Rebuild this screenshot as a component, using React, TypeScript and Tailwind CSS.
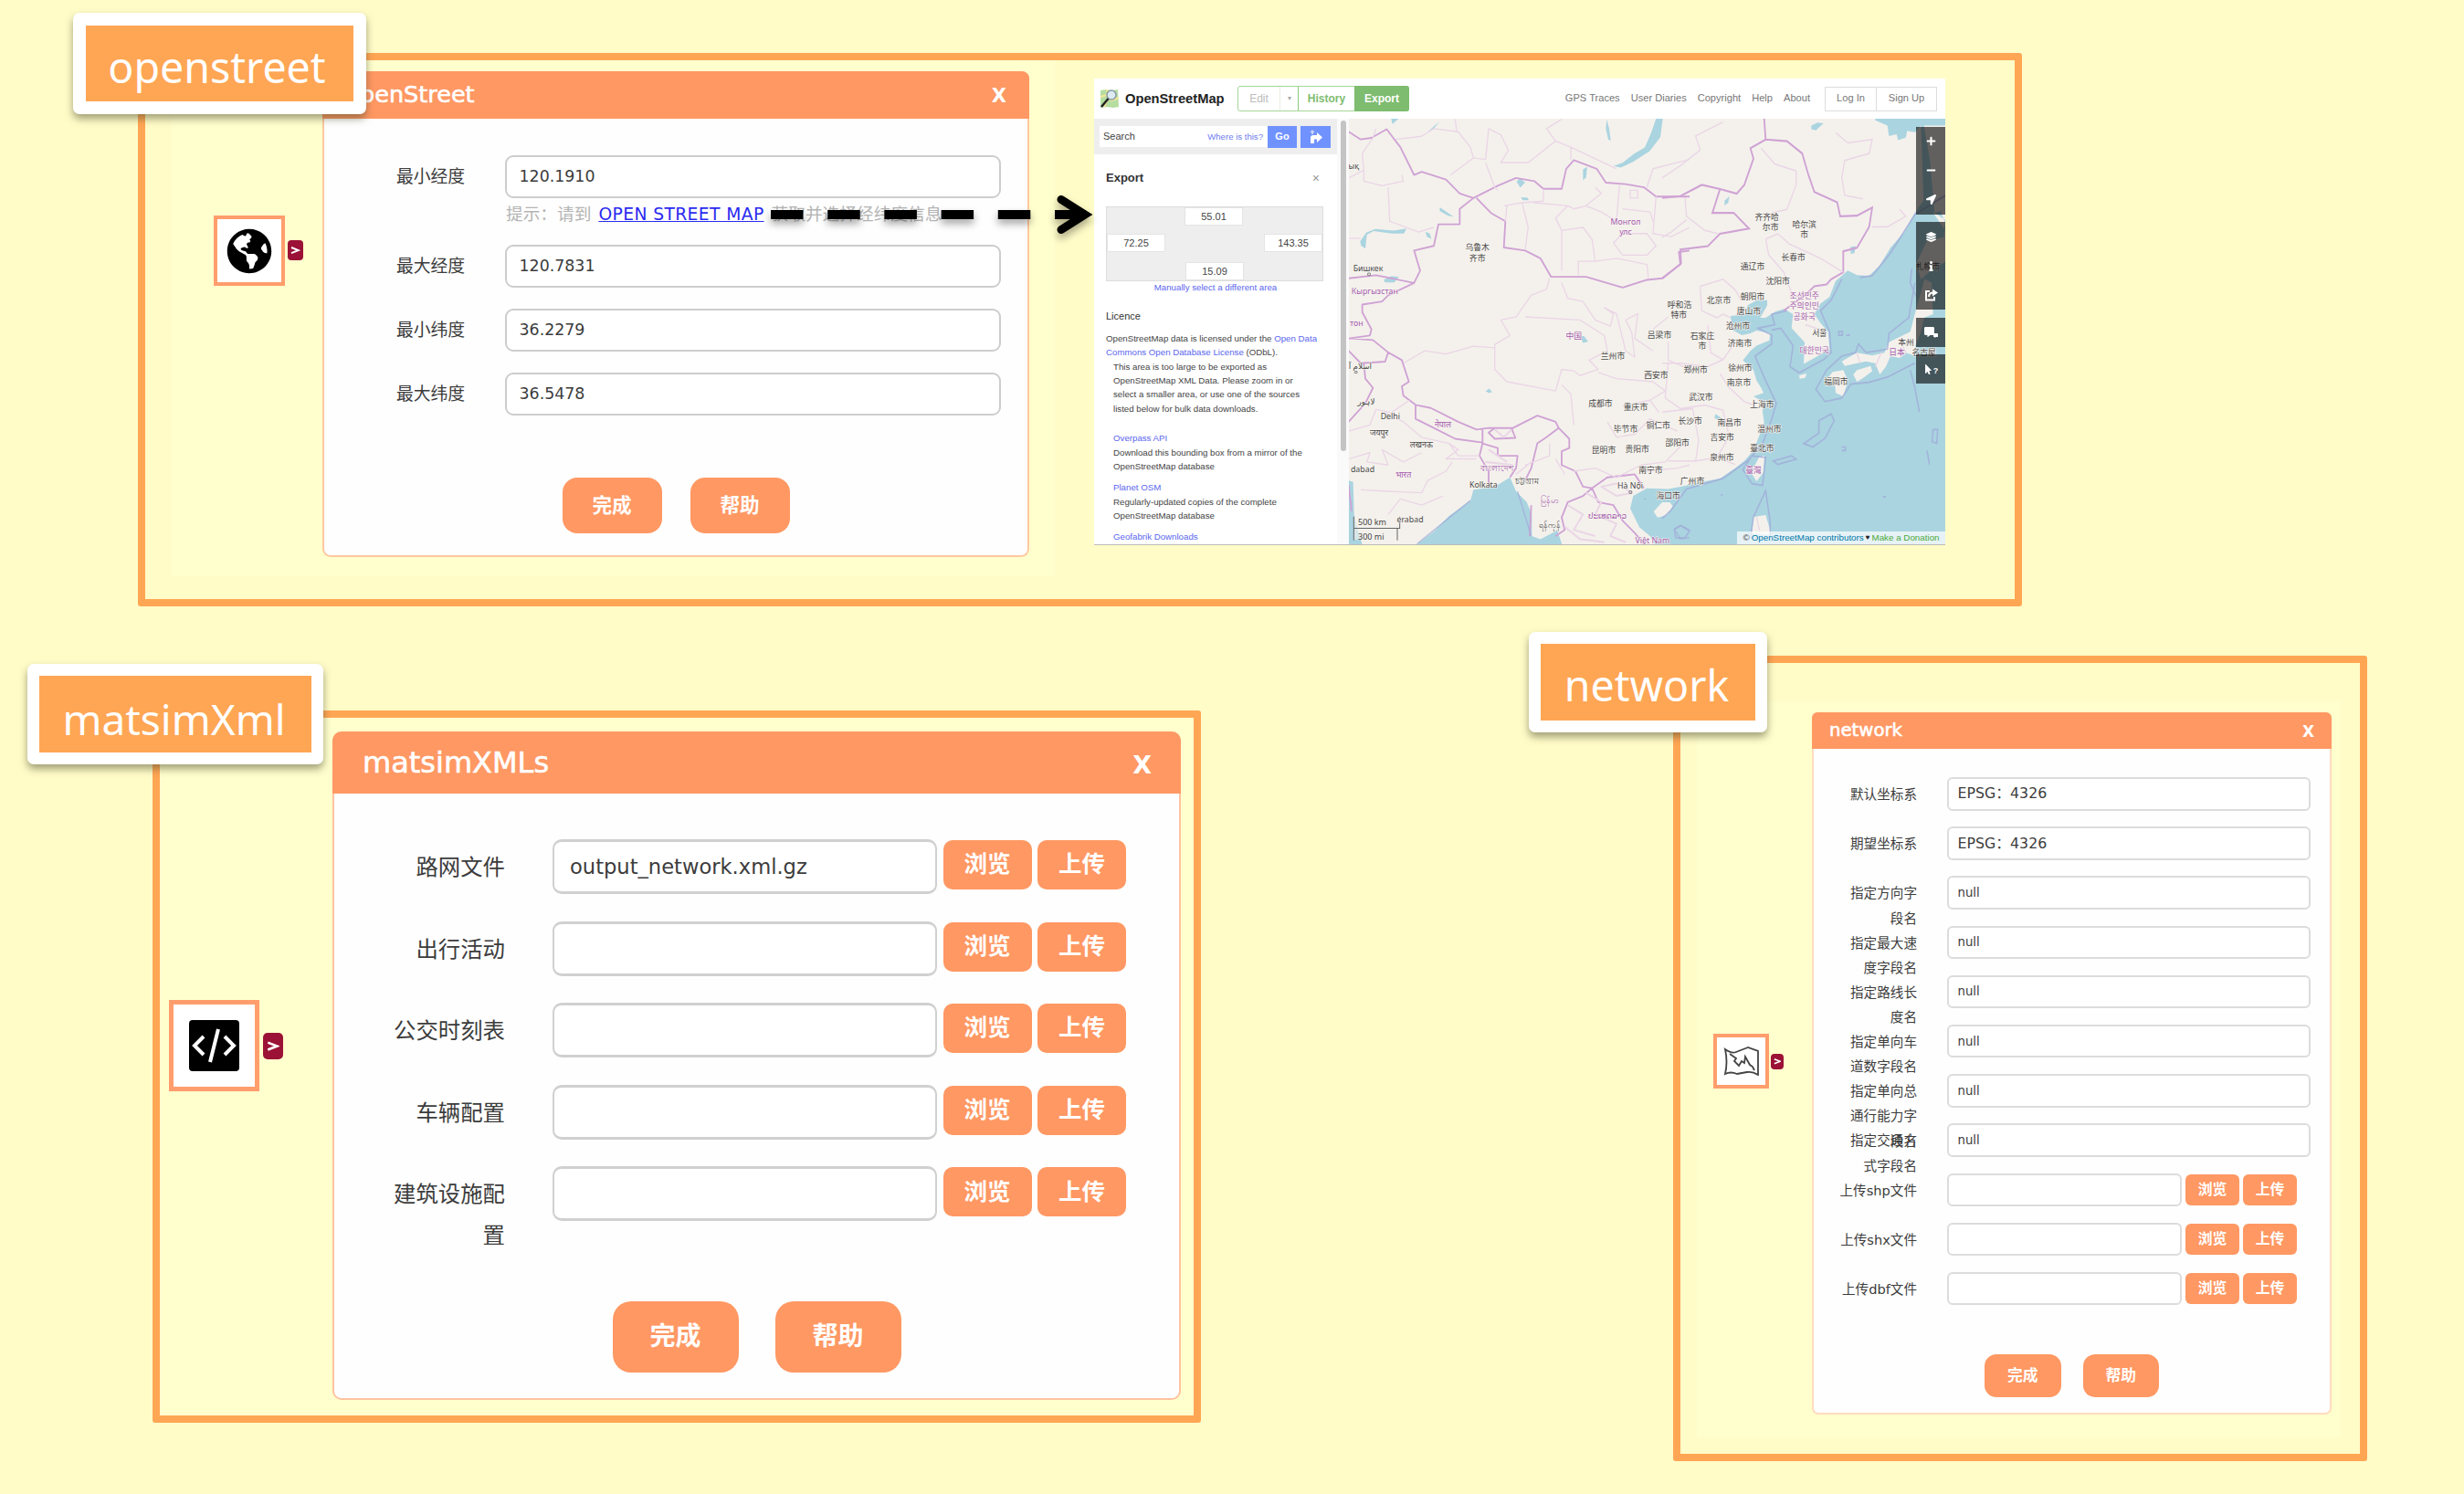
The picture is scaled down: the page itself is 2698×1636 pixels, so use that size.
import React from "react";
import {
  FaGlobeAmericas,
  FaPlus,
  FaMinus,
  FaLocationArrow,
  FaLayerGroup,
  FaInfo,
  FaCommentAlt,
  FaMousePointer,
} from "react-icons/fa";

/* ---------- dialogs ---------- */

type Theme = {
  box: string;
  header: string;
  title: string;
  close: string;
  body: string;
  row: string;
  label: string;
  labelPad: string;
  input: string;
  fileInput: string;
  value: string;
  small: string;
  actions: string;
  action: string;
};

const openTheme: Theme = {
  box: "w-[774px] h-[532px] rounded-[9px] border-[#ffc8a0]",
  header: "h-[52px] pl-[21px] pr-[25px] rounded-t-[8px]",
  title: "text-[25.5px]",
  close: "text-[21px] pt-[3px]",
  body: "pt-[40px]",
  row: "h-[70px]",
  label: "w-[154px] mr-[43.5px] pt-[6px] text-[18.8px] leading-[35px]",
  labelPad: "",
  input: "w-[543px] h-[47px] rounded-[9px] border-2 border-[#cdcdcd] pl-[14px]",
  fileInput: "",
  value: "text-[17.4px]",
  small: "",
  actions: "mt-[45px] gap-[31px]",
  action: "w-[109px] h-[61px] rounded-[16px] text-[21.6px]",
};

const matsimTheme: Theme = {
  box: "w-[929px] h-[732px] rounded-[10px] border-[#ffc3a0]",
  header: "h-[68px] pl-[33px] pr-[32px] rounded-t-[10px]",
  title: "text-[32px]",
  close: "text-[27px] pt-[4px]",
  body: "pt-[50px]",
  row: "h-[89.6px]",
  label: "w-[187px] mr-[52px] pt-[8px] text-[24.4px] leading-[45px]",
  labelPad: "pl-[58px]",
  input: "",
  fileInput: "w-[421px] h-[60px] rounded-[10px] border-2 border-y-[3px] border-[#d0d0d0] pl-[17px]",
  value: "text-[22.6px]",
  small: "w-[97px] h-[54px] mt-[1px] rounded-[10px] text-[25.5px] ml-[6.5px]",
  actions: "mt-[58px] gap-[40px]",
  action: "w-[138px] h-[78px] rounded-[20px] text-[28px]",
};

const networkTheme: Theme = {
  box: "w-[569px] h-[769px] rounded-[7px] border-[#ffdcc0]",
  header: "h-[40px] pl-[19px] pr-[19px] rounded-t-[6px]",
  title: "text-[19.7px]",
  close: "text-[17px] pt-[2px]",
  body: "pt-[31px]",
  row: "h-[54.2px]",
  label: "w-[113px] mr-[33px] pt-[5px] text-[14.6px] leading-[27.2px]",
  labelPad: "pl-[36px]",
  input: "w-[397.5px] h-[36.5px] rounded-[6px] border-2 border-[#dcdcdc] pl-[9.5px]",
  fileInput: "w-[257px] h-[36.5px] rounded-[6px] border-2 border-[#dcdcdc] pl-[9.5px]",
  value: "text-[13.3px]",
  small: "w-[59px] h-[34px] mt-[1px] rounded-[6px] text-[15.8px] ml-[4px]",
  actions: "mt-[36px] gap-[24px]",
  action: "w-[83.5px] h-[47px] rounded-[13px] text-[16.8px]",
};

type RowData = {
  label: string;
  value?: string;
  file?: boolean;
  wide?: boolean;
  valueClass?: string;
  hint?: React.ReactNode;
};

function Dialog({ title, rows, t, className }: { title: string; rows: RowData[]; t: Theme; className: string }) {
  return (
    <div
      className={`shrink-0 border-2 border-t-0 bg-[#fefefe] text-[#3c3c3c] font-['DejaVu_Sans','Noto_Sans_CJK_SC',sans-serif] ${t.box} ${className}`}
    >
      <div className={`-mx-[2px] flex items-center justify-between bg-[#ff9863] leading-none text-white ${t.header}`}>
        <span className={`[-webkit-text-stroke:0.6px_white] ${t.title}`}>{title}</span>
        <span className={`font-bold ${t.close}`}>X</span>
      </div>
      <div className={t.body}>
        {rows.map((r) => (
          <React.Fragment key={r.label}>
            <div className={`flex items-start ${t.row}`}>
              <div className={`shrink-0 text-right ${t.label} ${r.wide ? "whitespace-nowrap" : `break-all ${t.labelPad}`}`}>
                {r.label}
              </div>
              <div
                className={`flex shrink-0 items-center bg-white leading-none ${r.file ? t.fileInput : t.input} ${
                  r.valueClass ?? t.value
                }`}
              >
                {r.value}
              </div>
              {r.file && (
                <>
                  <Btn className={t.small}>浏览</Btn>
                  <Btn className={t.small}>上传</Btn>
                </>
              )}
            </div>
            {r.hint}
          </React.Fragment>
        ))}
        <div className={`flex justify-center ${t.actions}`}>
          <Btn className={t.action}>完成</Btn>
          <Btn className={t.action}>帮助</Btn>
        </div>
      </div>
    </div>
  );
}

function Btn({ children, className }: { children: React.ReactNode; className: string }) {
  return (
    <button className={`flex shrink-0 items-center justify-center bg-[#ff9863] font-bold leading-none text-white ${className}`}>
      {children}
    </button>
  );
}

function Tag({ children, className }: { children: string; className: string }) {
  return (
    <div
      className={`absolute z-10 flex items-center justify-center rounded-[7px] border-white bg-[#ffa654] font-['Noto_Sans','Open_Sans',sans-serif] leading-none text-white shadow-[0_5px_9px_rgba(70,70,40,0.5)] ${className}`}
    >
      {children}
    </div>
  );
}

function Port({ className }: { className: string }) {
  return (
    <div className={`flex shrink-0 items-center justify-center bg-[#9b1236] ${className}`}>
      <svg viewBox="0 0 10 10" className="w-[60%]" fill="none" stroke="white" strokeWidth="2">
        <path d="M1 2 8.500 5 1 8" />
      </svg>
    </div>
  );
}

/* ---------- map ---------- */

type P = [number, number, string, string?];

const westLabels: P[] = [
  [443, 572, "乌鲁木"],
  [443, 606, "齐市"],
  [888, 924, "兰州市"],
  [1030, 984, "西安市"],
  [847, 1077, "成都市"],
  [963, 1090, "重庆市"],
  [930, 1159, "毕节市"],
  [1037, 1147, "铜仁市"],
  [858, 1228, "昆明市"],
  [968, 1226, "贵阳市"],
  [1012, 1292, "南宁市"],
  [1041, 854, "吕梁市"],
  [1070, 1376, "海口市"],
  [945, 1343, "Hà Nội"],
  [84, 638, "Бишкек"],
  [37, 308, "ық"],
  [58, 955, "اسلام آ"],
  [78, 1070, "لاہور"],
  [157, 1119, "Delhi"],
  [120, 1172, "जयपुर"],
  [259, 1210, "लखनऊ"],
  [66, 1290, "dabad"],
  [463, 1341, "Kolkata"],
  [607, 1329, "চট্টগ্রাম"],
  [222, 1453, "erabad"],
  [680, 1470, "ရန်ကုန်"],
  [930, 487, "Монгол", "p"],
  [930, 521, "улс", "p"],
  [106, 712, "Кыргызстан", "p"],
  [46, 817, "тон", "p"],
  [760, 857, "中国", "p"],
  [330, 1146, "नेपाल", "p"],
  [200, 1308, "भारत", "p"],
  [508, 1287, "বাংলাদেশ", "p"],
  [680, 1391, "မြန်မာ", "p"],
  [870, 1440, "ປະເທດລາວ", "p"],
  [1018, 1519, "Việt Nam", "p"],
];

const eastLabels: P[] = [
  [344, 418, "齐齐哈"],
  [356, 447, "尔市"],
  [467, 438, "哈尔滨"],
  [467, 468, "市"],
  [431, 532, "长春市"],
  [297, 559, "通辽市"],
  [380, 600, "沈阳市"],
  [297, 645, "朝阳市"],
  [186, 656, "北京市"],
  [285, 688, "唐山市"],
  [57, 669, "呼和浩"],
  [55, 698, "特市"],
  [249, 729, "沧州市"],
  [132, 757, "石家庄"],
  [132, 787, "市"],
  [255, 778, "济南市"],
  [110, 854, "郑州市"],
  [256, 849, "徐州市"],
  [252, 892, "南京市"],
  [127, 934, "武汉市"],
  [328, 955, "上海市"],
  [92, 1000, "长沙市"],
  [221, 1005, "南昌市"],
  [352, 1024, "温州市"],
  [50, 1064, "邵阳市"],
  [197, 1048, "吉安市"],
  [328, 1080, "臺北市"],
  [196, 1106, "泉州市"],
  [99, 1174, "广州市"],
  [517, 751, "서울"],
  [571, 888, "福岡市"],
  [801, 777, "本州"],
  [860, 806, "名古屋"],
  [873, 559, "札幌市"],
  [467, 642, "조선민주", "p"],
  [467, 672, "주의인민", "p"],
  [467, 703, "공화국", "p"],
  [500, 799, "대한민국", "p"],
  [771, 805, "日本", "p"],
  [300, 1142, "臺灣", "p"],
];

function Labels({ items, east }: { items: P[]; east?: boolean }) {
  return (
    <>
      {items.map(([x, y, s, k], i) => (
        <text
          key={i}
          x={x / 3 + (east ? 343 : -7)}
          y={y / (east ? 2.613 : 2.958) - 49}
          textAnchor="middle"
          fontSize={8.8}
          fill={k ? "#a55bae" : "#4a4a4a"}
          stroke="#f6f3ee"
          strokeWidth="1.200"
          paintOrder="stroke"
        >
          {s}
        </text>
      ))}
    </>
  );
}

function ChinaMap() {
  return (
    <svg
      width="653"
      height="466"
      viewBox="0 0 653 466"
      className="block bg-[#f4f1ec] font-['Noto_Sans','Noto_Sans_CJK_SC','DejaVu_Sans',sans-serif]"
    >
      {/* seas and lakes, eastern half */}
      <g transform="translate(343 -50) scale(.33333 .38270)">
        <path
          fill="#aad4e0"
          d="M930 300 870 350 830 400 795 455 750 500 715 550 680 580 640 578 610 565 570 595 550 640 520 660 500 690 520 715 545 740 550 790 500 815 465 832 468 770 425 730 430 690 400 675 370 683 340 700 322 700 345 665 345 650 310 650 280 665 275 690 225 695 230 735 262 750 290 745 310 737 355 745 352 765 310 780 290 795 265 822 300 850 310 880 325 900 333 915 300 925 330 940 330 970 335 1000 318 1040 300 1080 270 1110 240 1130 190 1160 130 1170 60 1184 20 1190-50 1188-95 1210-105 1246-75 1299-40 1325-20 1352H930Z"
        />
        <path fill="#aad4e0" d="M700 135 740 150 745 180 770 175 775 192 800 185 805 165 830 170 850 150 860 400 895 380 880 200 890 160 930 150V130H700ZM490 150l20-8 20 2-25 20-15-3ZM618 498l18-3-4 20-12 3ZM205 365l16-12-4 18-12 8ZM175 975l20 12-5 8-18-8Z" />
        <g fill="#f4f1ec">
          <path d="M860 150 880 250 895 400 930 420V150ZM890 400 915 395 930 430 925 470 870 480 835 545 850 590 890 560 930 540V450ZM862 590 885 600 890 690 860 700 850 740 832 780 835 810 800 800 780 815 750 810 735 840 715 862 700 830 670 825 640 830 600 838 590 825 640 800 690 808 730 800 745 770 780 755 815 740 830 690ZM640 850l45-12 5 15-30 20-20 10-12-20ZM560 855l35-5 15 30-15 45-25-10-3-30-25-10ZM318 1100l18-6-4 50-22 24-18-25ZM300 1270l40-5 15 45-5 12-55-5ZM450 865l25-5-5 12-18 3Z" />
          <path d="M0 1228 25 1228 35 1240 15 1265-15 1272-28 1255Z" />
        </g>
        <path fill="none" stroke="#9fa8d8" strokeWidth="4.500" opacity=".75" d="M930 350 830 405 750 515 690 580 650 585M590 590 555 650 520 680 550 740 555 800 530 820 450 858 420 840 430 780 390 730 360 735M410 680 360 690 370 720 315 730 360 750 360 775 305 810 340 880 375 945 360 990 330 1060 280 1110 200 1160 80 1190 30 1250 0 1275M265 1135l30-40 45 5-10 80-35-5ZM340 1195l15 90 0 45-65 0 10-60ZM465 1060l50-30 0-35 40-20 10 20-30 50-40 25ZM365 1110l60-15 15 10-60 15ZM40 1305l20-10 30 15-15 20-30 0ZM535 940 505 905 540 850 590 810 635 800 645 775 670 800 740 790 745 745 810 700 830 600M535 940 590 930 620 890 680 885 740 870 830 830M815 850l15 50 15 70M890 1020l15 0-3 40-15-5ZM870 1080l8 40M580 740h12v10h-12ZM605 750h12M590 1070h12v10h-12M725 1212h10M193 1207h6M820 560 815 600 835 640" />
        <g fill="none" stroke="#cfa2d4" strokeWidth="5.500">
          <path d="M0 357 60 352 130 320 190 332 245 345 270 320 300 245 290 215 340 190 410 195 460 230 480 290 500 340 575 370 585 410 640 408 690 385 680 440 640 500 595 510 595 570 555 590 540 605 500 610 470 635 430 660 400 680M190 332 165 400 235 400 285 445 190 460 150 495 60 505 62 545 0 588M340 190 335 130" />
        </g>
        <g fill="none" stroke="#ead6e6" strokeWidth="4">
          <path d="M0 300 60 265 125 220 110 180 200 140M325 215 370 260 440 280 440 320 410 390 360 400M570 170 610 200 690 190 680 230 600 250 590 300 600 350 660 360M690 440 740 440 800 410 780 390M340 475 380 460 420 490 520 530 595 570M340 475 350 520 400 570 430 640M125 610 200 590 240 620 260 650M125 610 130 680 180 700 200 690 225 700M75 355 80 410 140 450 185 460M0 470 30 455 80 420M0 830 60 830 150 840 200 820 240 770M20 830 10 930 60 960 140 950 200 965M190 860 220 900 270 940 300 950M0 970 100 960 120 1050 110 1110 180 1100M200 965 220 1040 180 1100 240 1120M20 1110 110 1110M150 720 160 800 200 820" />
          <path d="M700 840 720 800M640 800 650 830M780 760 800 800M310 1270 320 1310M470 720 540 740M480 780 540 790" />
        </g>
      </g>
      {/* seas and lakes, western half */}
      <g transform="translate(-7 -50) scale(.33333 .33800)">
        <path
          fill="#aad4e0"
          d="M240 1530 300 1485 350 1435 420 1385 430 1350 500 1340 550 1310 570 1355 605 1390 622 1430 622 1500 650 1510 690 1490 705 1480 722 1530ZM20 1320 35 1325 38 1430 50 1480 66 1530H20ZM1030 148h22l-8 60-35 45-55 35-40 18-24-5 30-10 38-30 35-20 20-45ZM58 545l20-28 30-12 60 5 42-6-8 16-40 0-60-8-22 12-5 45-14-10ZM135 670l25-12 25 2-15 18-30 0ZM572 352l10-12 18 14-16 17ZM586 402l22 2 4 8-20 0ZM790 312l14-8-4 35-10 8ZM320 435l15 10 30 20-18-3-28-15ZM272 515l14 4 6 18-14-6ZM160 148h24l-20 18ZM280 190l40-34-20 24ZM775 852l18 0 14 18-16 4ZM470 1030l12-8 10 12-12 2ZM868 150l8 30 5 40-8-5-8-35Z"
        />
        <g fill="none" stroke="#cfa2d4" strokeWidth="5.500" strokeLinejoin="round">
          <path d="M20 190 60 215 95 210 145 182 190 240 235 330 260 320 340 345 385 390 430 405 510 365 570 340 630 350 660 375 720 375 735 310 760 282 835 310 865 355 930 360 990 370 1030 400 1140 400M430 405 385 440 385 490 315 490 300 560 235 575 255 640 235 680 110 655 20 665M235 680 150 720 130 740 65 750 65 775 95 830 90 850 20 860M440 405 490 455 535 480 530 565 600 575 650 600 685 660 800 660 920 695 1000 670 1050 665 1110 620 1105 580 1140 575M30 860 100 865 150 905 195 930 218 1000 195 1015 200 1045 240 1075 290 1085 380 1130 440 1155 480 1150 560 1150 640 1110 700 1130 710 1150 745 1185 745 1215 720 1225 720 1270 765 1290 790 1340 820 1345 870 1310 960 1300 990 1345M240 1075 240 1120 300 1150 370 1185 460 1197 460 1155M480 1165 500 1150 555 1150 568 1182 500 1185ZM460 1200 510 1215 510 1240 575 1240 570 1280 550 1310M460 1200 450 1240 480 1290 480 1330M710 1150 670 1180 640 1200 620 1280 600 1320M20 900 60 940 140 935 150 905M70 940 75 990 100 1020 75 1070 20 1130M820 1345 790 1370 740 1390 720 1440 730 1480 700 1500M820 1345 840 1390 890 1400 920 1450 960 1490 990 1525M20 1335 30 1420M620 1400 615 1500" />
        </g>
        <g fill="none" stroke="#ead6e6" strokeWidth="4" strokeLinejoin="round">
          <path d="M20 340 70 315 65 260 100 210 110 180M70 310 70 350 130 365 200 350 195 330M150 370 155 480 250 515 300 500M20 535 60 535M175 215 260 205 300 180 380 190 420 240 430 275 470 280 480 180 520 200 545 250 520 290 610 290 700 220 750 240 900 310M430 275 355 330M470 290 500 370 510 380M370 150 375 190M700 220 670 180 720 150M750 240 750 280M530 430 590 420 660 415 660 375M590 420 610 500 600 570M540 430 535 480M630 420 740 430 700 470 720 510 720 640M740 430 760 440 800 430 850 390 830 370M800 430 850 450 900 480 910 360M720 510 790 500 820 540 830 610 775 610 775 655M830 610 900 600 1000 620 1005 665M890 550 920 520 1000 520 1030 560 1000 590 920 590ZM1030 400 1020 520 1080 530 1140 500M920 440 1010 450 1020 480M945 380h25v25h-25ZM1000 370 1020 310 1140 280M680 665 670 700 620 720 570 790 520 800 550 850 500 880 500 960 540 1000 700 1030 720 960 760 965 780 980 840 960 810 930 870 900 860 850 780 800 600 790M500 890 430 885 340 910 270 900 200 940M720 680 740 730 790 740 830 800 880 820 890 780 860 760 900 780 930 900 960 920 950 840 930 800 970 780 960 860 1020 900M840 970 900 990 1020 1000 1060 1030 1010 1060 1040 1100M720 1010 750 1040 760 1140M1070 870 1070 930 1140 960M1020 830 1070 790M20 1160 90 1140 110 1090 160 1100 220 1060M140 1100 200 1130 260 1180 350 1200 380 1240 450 1240M20 1250 90 1230 80 1260 150 1270 130 1220 200 1260 260 1230M60 1350 150 1355 260 1360 280 1320 340 1290 360 1260M150 1430 190 1380 260 1400 330 1370M350 1200 380 1220 340 1250 440 1250M760 1290 830 1280 900 1310 980 1270 1060 1260 1120 1200M870 1130 900 1180 960 1170 1010 1120 1100 1160M1000 1290 1100 1280 1140 1270M1010 1060 920 1080M600 1270 680 1240 680 1200M700 1250 730 1300M570 1300 620 1260" />
          <path d="M800 1360 850 1390 830 1430 900 1460 880 1500 930 1520M740 1400 790 1430 760 1480 830 1500M850 1340 900 1370 950 1360 900 1330ZM730 1470 780 1510 860 1520M480 1220 540 1260M470 1260 560 1270M500 1155 530 1180 555 1155" strokeWidth="6" />
        </g>
        <g fill="none" stroke="#9fa8d8" strokeWidth="4">
          <path d="M1090 1480 1110 1465 1140 1480M1095 1485 1110 1510 1140 1505M990 1380h6M245 1525 420 1385M575 1355 620 1500" opacity=".7" />
        </g>
        <g fill="none" stroke="#777" strokeWidth="2.500">
          <path d="M83 648h8v8h-8ZM942 1354h8v8h-8ZM40 966h8v6h-8Z" />
        </g>
        <path fill="#f4f1ec" fillOpacity=".6" d="M37 1440H190V1475H183V1512H37Z" />
        <path fill="none" stroke="#666" strokeWidth="3" d="M37 1437V1514M37 1475H188V1437M180 1475V1514" />
      </g>
      <Labels items={westLabels} />
      <Labels items={eastLabels} east />
      <text x="10" y="445" fontSize="9" fill="#444">500 km</text>
      <text x="10" y="461" fontSize="9" fill="#444">300 mi</text>
    </svg>
  );
}

function MapControls() {
  const cell = "flex h-[32px] items-center justify-center";
  const dark = "bg-black/60";
  return (
    <div className="absolute top-[8.500px] right-0 flex w-[32px] flex-col gap-[8.500px] text-[11px] text-white">
      <div className={dark}>
        <div className={cell}><FaPlus /></div>
        <div className={cell}><FaMinus /></div>
        <div className={cell}><FaLocationArrow /></div>
      </div>
      <div className={dark}>
        <div className={cell}><FaLayerGroup /></div>
        <div className={cell}><FaInfo /></div>
        <div className={cell}>
          <svg width="15" height="14" viewBox="0 0 15 14" fill="none" stroke="white" strokeWidth="2">
            <path d="M6 3H2V12.500H11V9" />
            <path d="M5 9Q5 4.500 10 4.500" />
            <path d="M9 .5 15 4.500 9 8.500Z" fill="white" stroke="none" />
          </svg>
        </div>
      </div>
      <div className={dark}>
        <div className={cell}>
          <FaCommentAlt />
          <FaCommentAlt className="mt-2 -ml-px text-[5px]" />
        </div>
      </div>
      <div className={dark}>
        <div className={`${cell} font-bold leading-none`}>
          <FaMousePointer />
          <span className="pt-1 text-[9px]">?</span>
        </div>
      </div>
    </div>
  );
}

function Link({ children }: { children: React.ReactNode }) {
  return <span className="text-[#5a66ee]">{children}</span>;
}

function OsmScreenshot() {
  const coord = "absolute flex h-[20px] w-[64px] items-center justify-center border border-[#e4e4e4] bg-white text-[11px]";
  return (
    <div className="mt-[20px] ml-[43px] flex h-[511px] w-[932px] shrink-0 flex-col overflow-hidden border-b border-[#bbb] bg-white font-['Liberation_Sans',Arial,sans-serif] leading-none text-[#444]">
      <div className="flex h-[44px] shrink-0 items-center pr-[9px] pl-[6px]">
        <svg width="22" height="22" viewBox="0 0 22 22">
          <path d="M1 2 7 1l7 1 6-1 1 19-6 1-7-1-7 1Z" fill="#b5dda0" />
          <path d="M1 9 8 7l5 6 8-3M8 1l2 8-5 11" stroke="#f5e79a" strokeWidth="2" fill="none" />
          <circle cx="13" cy="7" r="5" fill="#dceaf2" stroke="#8a9aa5" strokeWidth="1.500" />
          <path d="M9.500 11 2 20" stroke="#222" strokeWidth="2.500" />
        </svg>
        <span className="ml-[6px] w-[117px] whitespace-nowrap text-[14.700px] font-bold text-[#222]">OpenStreetMap</span>
        <div className="ml-[6px] flex h-[28px] w-[188px] shrink-0 rounded-[3px] border border-[#a5d69a] text-[12px]">
          <div className="flex w-[46px] items-center justify-center border-r border-[#e5efe2] text-[#bbb]">Edit</div>
          <div className="flex w-[20px] items-center justify-center border-r border-[#8cc97f] text-[8px] text-[#aaa]">▾</div>
          <div className="flex w-[61px] items-center justify-center font-bold text-[#7ebc6f]">History</div>
          <div className="-my-px -mr-px flex flex-1 items-center justify-center rounded-r-[3px] bg-[#7ebc6f] font-bold text-white">Export</div>
        </div>
        <div className="ml-auto flex items-center gap-[12px] whitespace-nowrap text-[11.100px] text-[#777]">
          <span>GPS Traces</span>
          <span>User Diaries</span>
          <span>Copyright</span>
          <span>Help</span>
          <span>About</span>
          <div className="ml-[4px] flex h-[27px] border border-[#ddd]">
            <span className="flex w-[56px] items-center justify-center border-r border-[#ddd]">Log In</span>
            <span className="flex w-[65px] items-center justify-center">Sign Up</span>
          </div>
        </div>
      </div>
      <div className="flex min-h-0 flex-1">
        <div className="w-[266px] shrink-0 overflow-hidden">
          <div className="flex h-[39px] items-center bg-[#eee] pl-[6px]">
            <div className="flex h-[23px] w-[184px] items-center justify-between bg-white pr-[5px] pl-[4px] text-[11px]">
              <span>Search</span>
              <span className="text-[9.600px] text-[#6f7df0]">Where is this?</span>
            </div>
            <div className="flex h-[24px] w-[32px] items-center justify-center bg-[#7092ff] text-[11px] font-bold text-white">Go</div>
            <div className="ml-[4px] flex h-[24px] w-[33px] items-center justify-center bg-[#7092ff]">
              <svg width="16" height="16" viewBox="0 0 16 16" fill="white">
                <path d="M2 15V9Q2 6 5 6H9V3L15 8.500 9 14V10.500H6V15Z" />
                <path d="M3 5V3L1 3 4 0 7 3H5V5Z" opacity=".6" />
              </svg>
            </div>
          </div>
          <div className="px-[13px] pt-[19px] text-[9.700px] leading-[15.300px]">
            <div className="flex items-center justify-between pr-[6px] leading-[14px]">
              <span className="text-[13px] font-bold text-[#333]">Export</span>
              <span className="text-[14px] text-[#999]">×</span>
            </div>
            <div className="relative mt-[24px] h-[82px] w-[238px] border border-[#ddd] bg-[#eee] leading-none">
              <div className={`${coord} top-0 left-[85px]`}>55.01</div>
              <div className={`${coord} top-[29px] left-0`}>72.25</div>
              <div className={`${coord} top-[29px] right-0`}>143.35</div>
              <div className={`${coord} bottom-0 left-[86px]`}>15.09</div>
            </div>
            <div className="-mt-[1px] text-center"><Link>Manually select a different area</Link></div>
            <div className="mt-[17px] text-[11px] text-[#333]">Licence</div>
            <div className="mt-[8.500px] whitespace-nowrap">
              <div>OpenStreetMap data is licensed under the <Link>Open Data</Link></div>
              <div><Link>Commons Open Database License</Link> (ODbL).</div>
              <div className="pl-[8px]">
                <div>This area is too large to be exported as</div>
                <div>OpenStreetMap XML Data. Please zoom in or</div>
                <div>select a smaller area, or use one of the sources</div>
                <div>listed below for bulk data downloads.</div>
                <div className="mt-[17.500px]"><Link>Overpass API</Link></div>
                <div>Download this bounding box from a mirror of the</div>
                <div>OpenStreetMap database</div>
                <div className="mt-[8px]"><Link>Planet OSM</Link></div>
                <div>Regularly-updated copies of the complete</div>
                <div>OpenStreetMap database</div>
                <div className="mt-[8px]"><Link>Geofabrik Downloads</Link></div>
              </div>
            </div>
          </div>
        </div>
        <div className="w-[13px] shrink-0 bg-[#fafafa] pt-[2px] pl-[4px]">
          <div className="h-[362px] w-[6px] rounded-[3px] bg-[#c4c4c4]" />
        </div>
        <div className="relative flex-1 overflow-hidden">
          <ChinaMap />
          <MapControls />
          <div className="absolute right-0 bottom-0 flex h-[14px] w-[228px] items-center justify-center gap-[2px] whitespace-nowrap bg-white/70 text-[9.800px]">
            <span>©</span>
            <span className="text-[#0078a8]">OpenStreetMap contributors</span>
            <span className="text-[8px] text-[#222]">♥</span>
            <span className="text-[#4aa83a]">Make a Donation</span>
          </div>
        </div>
      </div>
    </div>
  );
}

/* ---------- data ---------- */

const openRows: RowData[] = [
  {
    label: "最小经度",
    value: "120.1910",
    hint: (
      <div className="-mt-[23px] mb-[15px] h-[36px] whitespace-nowrap pl-[199px] text-[18.700px] leading-[36px] text-[#b4b4b4]">
        提示：请到
        <span className="mr-[8px] ml-[8px] tracking-[0.400px] text-[#2a2af0] underline">OPEN STREET MAP</span>
        获取并选择经纬度信息
      </div>
    ),
  },
  { label: "最大经度", value: "120.7831" },
  { label: "最小纬度", value: "36.2279" },
  { label: "最大纬度", value: "36.5478" },
];

const matsimRows: RowData[] = [
  { label: "路网文件", value: "output_network.xml.gz", file: true },
  { label: "出行活动", file: true },
  { label: "公交时刻表", file: true },
  { label: "车辆配置", file: true },
  { label: "建筑设施配置", file: true },
];

const networkRows: RowData[] = [
  { label: "默认坐标系", value: "EPSG：4326", valueClass: "text-[15.800px]" },
  { label: "期望坐标系", value: "EPSG：4326", valueClass: "text-[15.800px]" },
  { label: "指定方向字段名", value: "null" },
  { label: "指定最大速度字段名", value: "null" },
  { label: "指定路线长度名", value: "null" },
  { label: "指定单向车道数字段名", value: "null" },
  { label: "指定单向总通行能力字段名", value: "null" },
  { label: "指定交通方式字段名", value: "null" },
  { label: "上传shp文件", file: true, wide: true },
  { label: "上传shx文件", file: true, wide: true },
  { label: "上传dbf文件", file: true, wide: true },
];

export default function App() {
  return (
    <main className="flex h-[1636px] w-[2698px] flex-col overflow-hidden bg-[#fffcc8]">
      <section className="relative mt-[58px] ml-[151px] flex h-[606px] w-[2063px] shrink-0 items-start rounded-[3px] border-8 border-[#ffa654]">
        <Tag className="-top-[52px] -left-[79px] h-[111px] w-[321px] border-[14px] pt-[8px] pr-[6px] text-[46.500px]">openstreet</Tag>
        <div className="ml-[28px] flex h-[565px] w-[968px] shrink-0 items-start bg-[#fffecd]">
          <div className="mt-[170px] ml-[47px] flex h-[77px] w-[78px] shrink-0 items-center justify-center border-4 border-[#ff9e6c] bg-white">
            <FaGlobeAmericas className="size-[50px] text-black" />
          </div>
          <Port className="mt-[197px] ml-[3px] h-[22px] w-[17px] rounded-[4px]" />
          <Dialog title="OpenStreet" rows={openRows} t={openTheme} className="mt-[12px] ml-[21px]" />
        </div>
        <OsmScreenshot />
        <svg
          className="absolute top-[139px] left-[685px] drop-shadow-[0_5px_4px_rgba(0,0,0,0.35)]"
          width="358"
          height="60"
          viewBox="0 0 358 60"
          fill="none"
          stroke="black"
          strokeWidth="10"
        >
          <path d="M0 30H345" strokeDasharray="35.500 26.700" />
          <path d="M318 13.500 344 30 318 46.500" strokeWidth="9" strokeLinecap="round" />
          <path d="M328 19 352 30 328 41Z" fill="black" stroke="none" />
        </svg>
      </section>

      <div className="flex items-start">
        <section className="relative mt-[114px] ml-[167px] flex h-[780px] w-[1148px] shrink-0 items-start rounded-[3px] border-8 border-[#ffa654] bg-[#fffecd]">
          <Tag className="-top-[59px] -left-[145px] h-[110px] w-[324px] border-[13px] pt-[9px] pr-[3px] text-[46px]">matsimXml</Tag>
          <div className="mt-[309px] ml-[10px] flex h-[100px] w-[99px] shrink-0 items-center justify-center border-[5px] border-[#ff9e6c] bg-white">
            <svg width="55" height="56" viewBox="0 0 55 56" fill="none" stroke="white" strokeWidth="4">
              <rect width="55" height="56" rx="4" fill="black" stroke="none" />
              <path d="M16 18 6 28 16 38M39 18 49 28 39 38M32 10 23 46" />
            </svg>
          </div>
          <Port className="mt-[345px] ml-[4px] h-[29px] w-[22px] rounded-[5px]" />
          <Dialog title="matsimXMLs" rows={matsimRows} t={matsimTheme} className="mt-[15px] ml-[54px]" />
        </section>

        <section className="relative mt-[54px] ml-[517px] flex h-[882px] w-[760px] shrink-0 items-start rounded-[3px] border-8 border-[#ffa654]">
          <Tag className="-top-[34px] -left-[166px] h-[110px] w-[261px] border-[13px] pt-[6px] pr-[3px] text-[46.500px]">network</Tag>
          <div className="mt-[42px] ml-[18px] flex h-[806px] w-[705px] shrink-0 items-start bg-[#fffecd]">
            <div className="mt-[364px] ml-[18px] flex h-[60px] w-[61px] shrink-0 items-center justify-center border-4 border-[#ff9e6c] bg-white">
              <svg width="40" height="32" viewBox="0 0 40 32" fill="none" stroke="#444" strokeWidth="1.800">
                <path d="M2 3Q9 8 14 6T27 1L38 5V31Q32 27 26 28T15 30Q8 27 2 30Q5 17 2 3Z" />
                <path d="M7 8 14 13 12 16 17 21 20 16 23 18 24 11 29 20 32 22 34 26" />
              </svg>
            </div>
            <Port className="mt-[386px] ml-[2px] h-[17px] w-[14px] rounded-[4px]" />
            <Dialog title="network" rows={networkRows} t={networkTheme} className="mt-[12px] ml-[31px]" />
          </div>
        </section>
      </div>
    </main>
  );
}
